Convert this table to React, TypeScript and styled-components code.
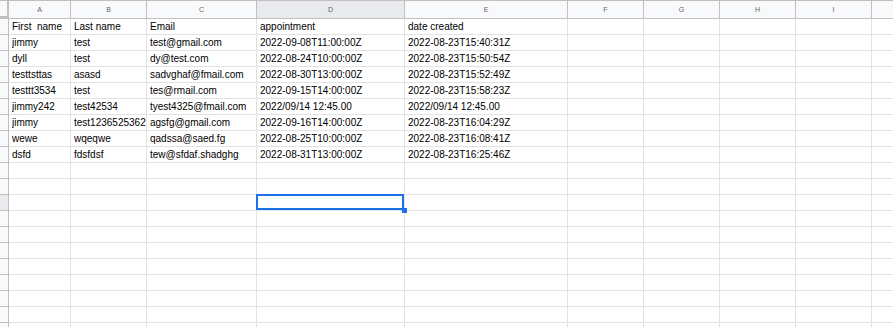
import React from "react";
import styled, { createGlobalStyle } from "styled-components";

const GlobalStyle = createGlobalStyle`
  html, body { margin: 0; padding: 0; background: #fff; overflow: hidden; }
  body { width: 893px; height: 327px; font-family: "Liberation Sans", Arial, sans-serif; }
`;

const COLS = [
  { id: "A", w: 62 },
  { id: "B", w: 76 },
  { id: "C", w: 110 },
  { id: "D", w: 148 },
  { id: "E", w: 163 },
  { id: "F", w: 76 },
  { id: "G", w: 76 },
  { id: "H", w: 76 },
  { id: "I", w: 76 },
  { id: "", w: 22 },
];

const DATA: string[][] = [
  ["First  name", "Last name", "Email", "appointment", "date created"],
  ["jimmy", "test", "test@gmail.com", "2022-09-08T11:00:00Z", "2022-08-23T15:40:31Z"],
  ["dyll", "test", "dy@test.com", "2022-08-24T10:00:00Z", "2022-08-23T15:50:54Z"],
  ["testtsttas", "asasd", "sadvghaf@fmail.com", "2022-08-30T13:00:00Z", "2022-08-23T15:52:49Z"],
  ["testtt3534", "test", "tes@rmail.com", "2022-09-15T14:00:00Z", "2022-08-23T15:58:23Z"],
  ["jimmy242", "test42534", "tyest4325@fmail.com", "2022/09/14 12:45.00", "2022/09/14 12:45.00"],
  ["jimmy", "test1236525362", "agsfg@gmail.com", "2022-09-16T14:00:00Z", "2022-08-23T16:04:29Z"],
  ["wewe", "wqeqwe", "qadssa@saed.fg", "2022-08-25T10:00:00Z", "2022-08-23T16:08:41Z"],
  ["dsfd", "fdsfdsf", "tew@sfdaf.shadghg", "2022-08-31T13:00:00Z", "2022-08-23T16:25:46Z"],
];

const ROW_COUNT = 20;
const SEL_ROW = 11; // row 12 (0-based)
const SEL_COL = 3; // column D

const Sheet = styled.div`
  display: grid;
  grid-template-columns: 9px ${COLS.map((c) => c.w + "px").join(" ")};
  grid-auto-rows: 16px;
  grid-template-rows: 19px;
  width: 893px;
  height: 327px;
  overflow: hidden;
`;

const Corner = styled.div`
  box-sizing: border-box;
  background: #f8f9fa;
  border-top: 1px solid #c0c0c0;
  border-right: 2px solid #c0c0c0;
  border-bottom: 3px solid #c0c0c0;
`;

const ColHeader = styled.div<{ $active?: boolean }>`
  box-sizing: border-box;
  background: ${(p) => (p.$active ? "#e8eaed" : "#f8f9fa")};
  border-top: 1px solid #c0c0c0;
  border-right: 1px solid #c0c0c0;
  border-bottom: 1px solid #c0c0c0;
  color: #5f6368;
  font-size: 7px;
  line-height: 17px;
  text-align: center;
  overflow: hidden;
  white-space: nowrap;
`;

const RowHeader = styled.div<{ $active?: boolean }>`
  box-sizing: border-box;
  background: ${(p) => (p.$active ? "#e8eaed" : "#f8f9fa")};
  border-right: 1px solid #c0c0c0;
  border-bottom: 1px solid #c0c0c0;
`;

const Cell = styled.div`
  position: relative;
  box-sizing: border-box;
  border-right: 1px solid #e2e2e2;
  border-bottom: 1px solid #e2e2e2;
  padding: 0 0 0 3px;
  font-size: 10px;
  line-height: 15px;
  color: #000;
`;

const CellText = styled.span`
  display: block;
  overflow: hidden;
  white-space: pre;
`;

const Selection = styled.div`
  position: absolute;
  top: -1px;
  left: -1px;
  width: calc(100% + 1px);
  height: calc(100% + 1px);
  box-sizing: border-box;
  border: 2px solid #1a73e8;
  pointer-events: none;
  z-index: 2;
`;

const Handle = styled.div`
  position: absolute;
  right: -3px;
  bottom: -3px;
  width: 5px;
  height: 5px;
  background: #1a73e8;
  z-index: 3;
`;

export default function App() {
  return (
    <>
      <GlobalStyle />
      <Sheet>
        <Corner />
        {COLS.map((c, i) => (
          <ColHeader key={i} $active={i === SEL_COL}>
            {c.id}
          </ColHeader>
        ))}
        {Array.from({ length: ROW_COUNT }).map((_, r) => (
          <React.Fragment key={r}>
            <RowHeader $active={r === SEL_ROW} />
            {COLS.map((c, ci) => {
              const value = DATA[r]?.[ci] ?? "";
              const selected = r === SEL_ROW && ci === SEL_COL;
              return (
                <Cell key={ci}>
                  <CellText>{value}</CellText>
                  {selected && (
                    <>
                      <Selection />
                      <Handle />
                    </>
                  )}
                </Cell>
              );
            })}
          </React.Fragment>
        ))}
      </Sheet>
    </>
  );
}
